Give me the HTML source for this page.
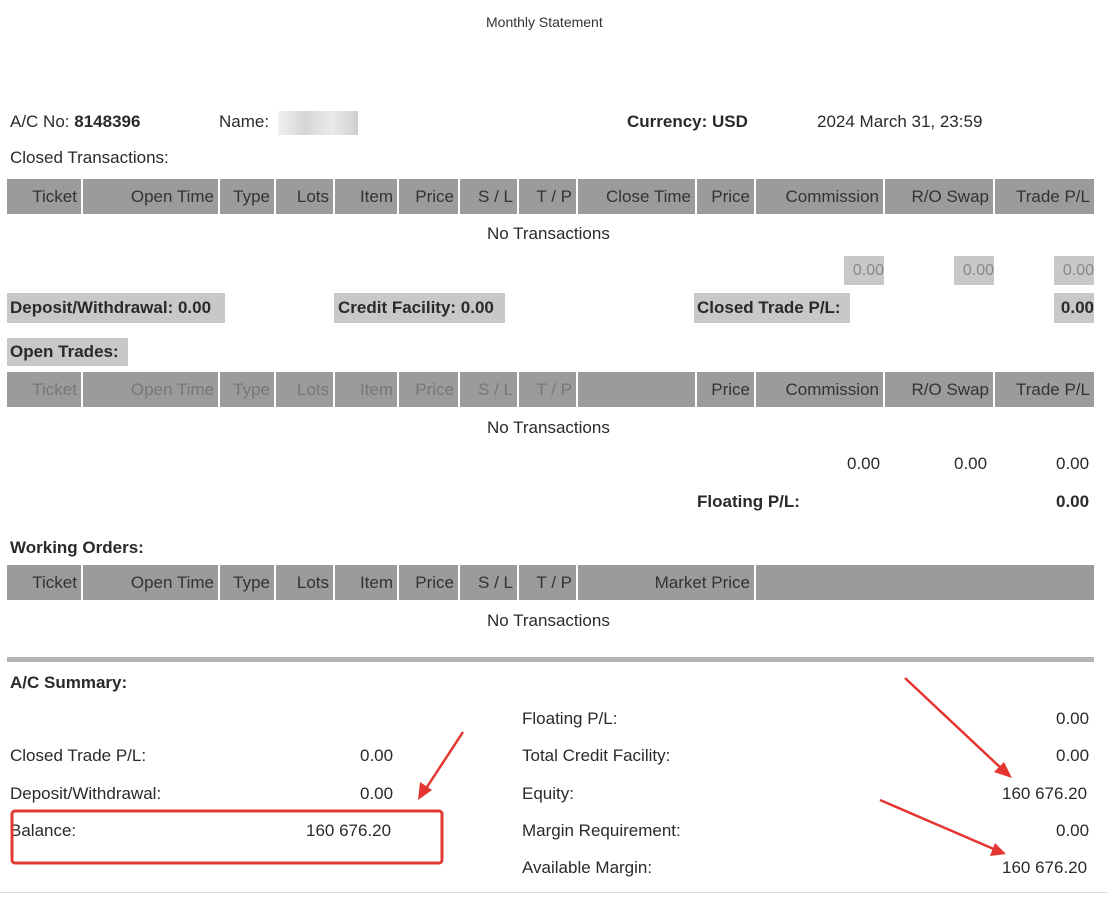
<!DOCTYPE html>
<html><head><meta charset="utf-8"><style>
body{margin:0;width:1108px;height:898px;background:#fff;position:relative;overflow:hidden;font-family:"Liberation Sans",Arial,sans-serif;font-size:17px;color:#2a2a2a}
.a{position:absolute;white-space:nowrap}
.row{position:absolute;left:7px;display:flex;height:35px}
.row div{background:#9b9b9b;border-right:2px solid #fff;box-sizing:border-box;text-align:right;padding-right:4px;line-height:35px;color:#333}
.row div:last-child{border-right:none}
.g{background:#c8c8c8}
.lt{color:#777 !important}
b{font-weight:bold}
</style></head><body>
<div class="a" style="left:486px;top:14px;font-size:14px;color:#333">Monthly Statement</div>
<div class="a" style="left:10px;top:112px">A/C No: <b>8148396</b></div>
<div class="a" style="left:219px;top:112px">Name:</div>
<div class="a" style="left:278px;top:111px;width:80px;height:24px;background:linear-gradient(90deg,#eee,#ccc,#e4e4e4,#c4c4c4);opacity:.8"></div>
<div class="a" style="left:627px;top:112px"><b>Currency: USD</b></div>
<div class="a" style="left:817px;top:112px">2024 March 31, 23:59</div>
<div class="a" style="left:10px;top:148px">Closed Transactions:</div>

<div class="row" style="top:179px">
<div style="width:76px">Ticket</div><div style="width:137px">Open Time</div><div style="width:56px">Type</div><div style="width:59px">Lots</div><div style="width:64px">Item</div><div style="width:61px">Price</div><div style="width:59px">S / L</div><div style="width:59px">T / P</div><div style="width:119px">Close Time</div><div style="width:59px">Price</div><div style="width:129px">Commission</div><div style="width:110px">R/O Swap</div><div style="width:99px">Trade P/L</div></div>
<div class="a" style="left:487px;top:224px">No Transactions</div>
<div class="a g" style="left:844px;top:256px;width:40px;height:29px;line-height:29px;color:#888;text-align:right;font-size:16px">0.00</div>
<div class="a g" style="left:954px;top:256px;width:40px;height:29px;line-height:29px;color:#888;text-align:right;font-size:16px">0.00</div>
<div class="a g" style="left:1054px;top:256px;width:40px;height:29px;line-height:29px;color:#888;text-align:right;font-size:16px">0.00</div>
<div class="a g" style="left:7px;top:293px;width:218px;height:30px;line-height:30px;padding-left:3px;box-sizing:border-box"><b>Deposit/Withdrawal: 0.00</b></div>
<div class="a g" style="left:334px;top:293px;width:171px;height:30px;line-height:30px;padding-left:4px;box-sizing:border-box"><b>Credit Facility: 0.00</b></div>
<div class="a g" style="left:694px;top:293px;width:156px;height:30px;line-height:30px;padding-left:3px;box-sizing:border-box"><b>Closed Trade P/L:</b></div>
<div class="a g" style="left:1054px;top:293px;width:40px;height:30px;line-height:30px;text-align:right"><b>0.00</b></div>
<div class="a g" style="left:7px;top:338px;width:121px;height:28px;line-height:28px;padding-left:3px;box-sizing:border-box"><b>Open Trades:</b></div>

<div class="row" style="top:372px">
<div class="lt" style="width:76px">Ticket</div><div class="lt" style="width:137px">Open Time</div><div class="lt" style="width:56px">Type</div><div class="lt" style="width:59px">Lots</div><div class="lt" style="width:64px">Item</div><div class="lt" style="width:61px">Price</div><div class="lt" style="width:59px">S / L</div><div class="lt" style="width:59px">T / P</div><div style="width:119px"></div><div style="width:59px">Price</div><div style="width:129px">Commission</div><div style="width:110px">R/O Swap</div><div style="width:99px">Trade P/L</div></div>
<div class="a" style="left:487px;top:418px">No Transactions</div>
<div class="a" style="left:847px;top:454px">0.00</div>
<div class="a" style="left:954px;top:454px">0.00</div>
<div class="a" style="left:1056px;top:454px">0.00</div>
<div class="a" style="left:697px;top:492px"><b>Floating P/L:</b></div>
<div class="a" style="left:1056px;top:492px"><b>0.00</b></div>
<div class="a" style="left:10px;top:538px"><b>Working Orders:</b></div>

<div class="row" style="top:565px">
<div style="width:76px">Ticket</div><div style="width:137px">Open Time</div><div style="width:56px">Type</div><div style="width:59px">Lots</div><div style="width:64px">Item</div><div style="width:61px">Price</div><div style="width:59px">S / L</div><div style="width:59px">T / P</div><div style="width:178px">Market Price</div><div style="width:338px"></div></div>
<div class="a" style="left:487px;top:611px">No Transactions</div>

<div class="a" style="left:7px;top:657px;width:1087px;height:5px;background:#b5b5b5"></div>
<div class="a" style="left:10px;top:673px"><b>A/C Summary:</b></div>
<div class="a" style="left:10px;top:746px">Closed Trade P/L:</div><div class="a" style="left:360px;top:746px">0.00</div>
<div class="a" style="left:10px;top:784px">Deposit/Withdrawal:</div><div class="a" style="left:360px;top:784px">0.00</div>
<div class="a" style="left:10px;top:821px">Balance:</div><div class="a" style="left:306px;top:821px">160 676.20</div>

<div class="a" style="left:522px;top:709px">Floating P/L:</div><div class="a" style="left:1056px;top:709px">0.00</div>
<div class="a" style="left:522px;top:746px">Total Credit Facility:</div><div class="a" style="left:1056px;top:746px">0.00</div>
<div class="a" style="left:522px;top:784px">Equity:</div><div class="a" style="left:1002px;top:784px">160 676.20</div>
<div class="a" style="left:522px;top:821px">Margin Requirement:</div><div class="a" style="left:1056px;top:821px">0.00</div>
<div class="a" style="left:522px;top:858px">Available Margin:</div><div class="a" style="left:1002px;top:858px">160 676.20</div>
<div class="a" style="left:0;top:892px;width:1108px;height:1px;background:#ddd"></div>

<svg class="a" style="left:0;top:0" width="1108" height="898">
<rect x="12" y="811" width="430" height="52" rx="3" fill="none" stroke="#e03a32" stroke-width="3"/>
<g stroke="#e53530" stroke-width="2.5" fill="#e53530">
<line x1="463" y1="732" x2="425" y2="790"/><polygon points="418,800 420,782 432,790" stroke="none"/>
<line x1="905" y1="678" x2="1003" y2="770"/><polygon points="1012,778 994,772 1004,762" stroke="none"/>
<line x1="880" y1="800" x2="996" y2="850"/><polygon points="1006,854 990,856 995,843" stroke="none"/>
</g>
</svg>
</body></html>
